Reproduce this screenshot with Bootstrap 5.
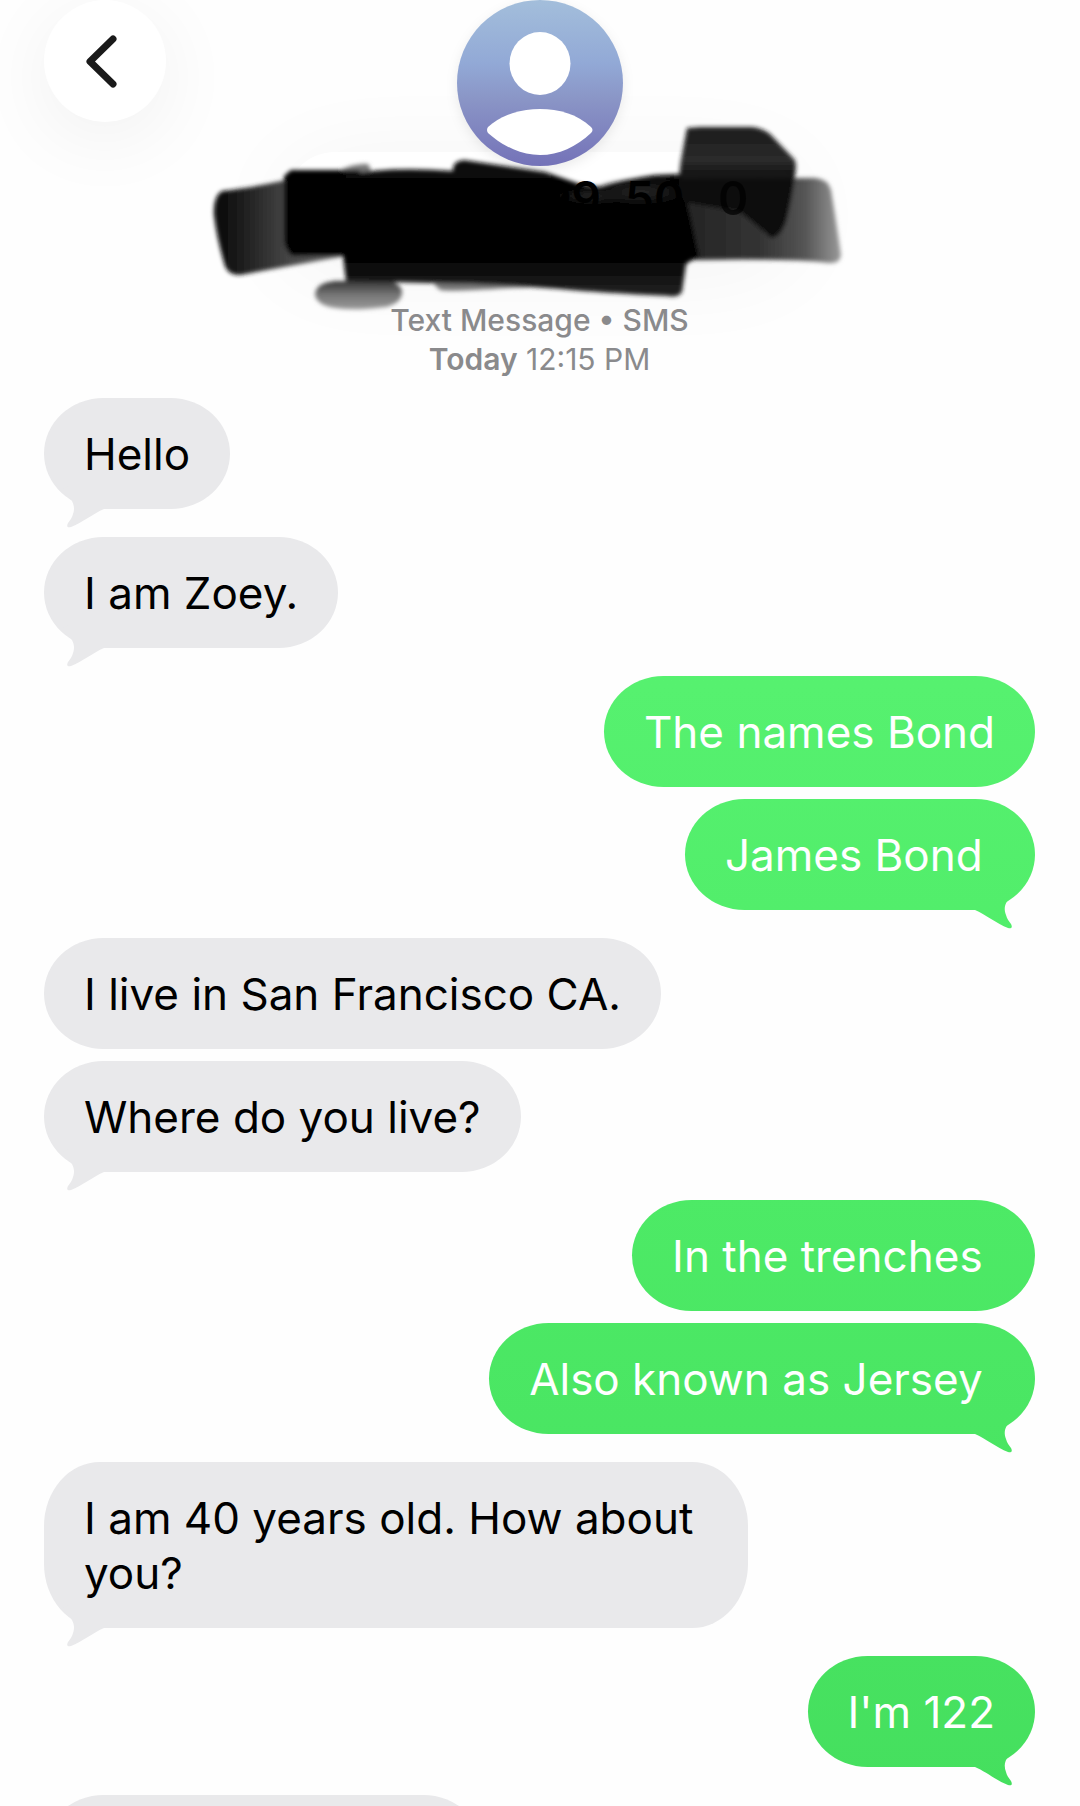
<!DOCTYPE html>
<html lang="en">
<head>
<meta charset="utf-8">
<meta name="viewport" content="width=device-width, initial-scale=1">
<title>Messages</title>
<link href="https://cdn.jsdelivr.net/npm/bootstrap@5.3.0/dist/css/bootstrap.min.css" rel="stylesheet">
<style>
  body { font-family: Inter, "Liberation Sans", sans-serif; background: #fefefe; color: #000; }
  .screen { padding: 0 45px 0 44px; }
  .thread-top { display: grid; grid-template-columns: 1fr auto 1fr; }
  .back-btn { width: 122px; height: 122px; background: #fff; box-shadow: 0 16px 80px rgba(0,0,0,.06); }
  .back-btn:hover { background: #fafafa; }
  .avatar { filter: drop-shadow(0 4px 6px rgba(0,0,0,.08)); }
  .contact-pill { width: 510px; height: 100px; margin-top: -14px; background: #fff; border-radius: 50px; box-shadow: 0 14px 100px rgba(0,0,0,.05); }
  .scribble { top: 110px; left: 50%; transform: translateX(-50%); z-index: 1; }
  .num { font-size: 46px; font-weight: 600; }
  .thread-meta { margin-top: 49px; font-size: 30px; line-height: 39px; color: #8a8a8c; z-index: 2; }
  .thread-meta strong { font-weight: 600; }
  .msgs { margin-top: 19px; gap: 12px; }
  .bubble { position: relative; padding: 29px 40px 27px; font-size: 44px; line-height: 55px; border-radius: 60px / 56px; max-width: 704px; }
  .received { background: #e9e9eb; align-self: flex-start; }
  .sent { align-self: flex-end; color: #fff; white-space: pre-wrap; }
  .sent, .sent.tail::after { background: linear-gradient(#5af576 0%, #56f16f 38%, #4dea66 66%, #45df5e 100%) fixed; }
  .tall { border-radius: 56px / 64px; }
  .tail { margin-bottom: 16px; }
  .tail::after { content: ""; position: absolute; bottom: -20px; width: 48px; height: 44px; }
  .received.tail::after { left: 16px; background: #e9e9eb; clip-path: path("M2 5 L10 13 C14 18 15 24 13 29 C12 33 10 35 8 38 C6 42 8 43 11 42 C22 38 34 28 44 24 L44 0 L10 0 Z"); }
  .sent.tail::after { right: 16px; clip-path: path("M46 5 L38 13 C33 18 33 24 35 29 C36 33 38 35 40 38 C42 42 40 43 37 42 C26 38 14 28 4 24 L4 0 L38 0 Z"); }
  .incoming { width: 439px; height: 111px; }
</style>
</head>
<body>
<div class="screen vh-100 overflow-hidden position-relative d-flex flex-column">
  <header class="thread-top">
    <div>
      <button type="button" class="back-btn btn border-0 rounded-circle p-0 d-flex align-items-center justify-content-center" aria-label="Back">
        <svg width="122" height="122" viewBox="0 0 122 122" fill="none" stroke="#1a1a1a" stroke-width="7" stroke-linecap="round" stroke-linejoin="round"><path d="M69 39 L46 61.500 L69 84"/></svg>
      </button>
    </div>
    <div class="d-flex flex-column align-items-center">
      <svg class="avatar position-relative z-1" width="166" height="166" viewBox="0 0 166 166" role="img" aria-label="Contact">
        <defs><linearGradient id="av" x1="0" y1="0" x2="0" y2="1"><stop offset="0" stop-color="#a3bedb"/><stop offset=".38" stop-color="#92a9d6"/><stop offset=".6" stop-color="#8a95c6"/><stop offset="1" stop-color="#7472b8"/></linearGradient></defs>
        <circle cx="83" cy="83" r="83" fill="url(#av)"/>
        <ellipse cx="83" cy="63.500" rx="30.500" ry="31.500" fill="#fff"/>
        <path d="M31 127 C46 114 64 109 83 109 C102 109 120 114 134 127 Q137 130 134 133 C119 147 102 155 83 155 C64 155 47 147 31 133 Q29 130 31 127 Z" fill="#fff"/>
      </svg>
      <div class="contact-pill"></div>
    </div>
  </header>

  <svg class="scribble position-absolute" width="680" height="210" viewBox="200 110 680 210" role="img" aria-label="Hidden number">
    <defs>
      <linearGradient id="sl" x1="0" x2="1"><stop offset="0" stop-color="#050505"/><stop offset=".2" stop-color="#1c1c1c"/><stop offset=".55" stop-color="#444"/><stop offset="1" stop-color="#666"/></linearGradient>
      <linearGradient id="sr" x1="0" x2="1"><stop offset="0" stop-color="#202020"/><stop offset=".55" stop-color="#333"/><stop offset=".8" stop-color="#555"/><stop offset="1" stop-color="#999"/></linearGradient>
      <linearGradient id="sb" x1="0" y1="0" x2="0" y2="1"><stop offset="0" stop-color="#111"/><stop offset=".3" stop-color="#222"/><stop offset=".42" stop-color="#0c0c0c"/><stop offset="1" stop-color="#0a0a0a"/></linearGradient>
      <linearGradient id="sm" x1="0" y1="0" x2="0" y2="1"><stop offset="0" stop-color="#111"/><stop offset=".22" stop-color="#000"/><stop offset=".7" stop-color="#000"/><stop offset="1" stop-color="#242424"/></linearGradient>
      <radialGradient id="st"><stop offset="0" stop-color="#262626"/><stop offset=".5" stop-color="#161616"/><stop offset="1" stop-color="#161616" stop-opacity="0"/></radialGradient>
      <linearGradient id="sp" x1="0" y1="0" x2="0" y2="1"><stop offset="0" stop-color="#333"/><stop offset=".5" stop-color="#777"/><stop offset="1" stop-color="#999"/></linearGradient>
      <filter id="soft" x="-5%" y="-5%" width="110%" height="110%"><feGaussianBlur stdDeviation="2"/></filter>
    </defs>
    <g filter="url(#soft)">
      <path d="M222 191 Q250 188 286 180 L345 176 L345 256 Q300 264 240 275 Q228 275 225 266 Q217 240 214 215 Q213 196 222 191Z" fill="url(#sl)"/>
      <path d="M315 294 Q316 283 335 281 L390 281 Q403 285 402 294 Q400 304 385 307 Q355 311 335 308 Q316 305 315 294Z" fill="url(#sp)"/>
      <path d="M340 170 Q355 163 368 164 L374 176 L340 180Z" fill="#777"/>
      <path d="M430 280 L440 290 Q450 292 510 288 L560 286 L560 278Z" fill="#777"/>
      <path d="M660 179 L815 178 Q828 179 831 190 Q836 220 841 255 Q840 264 829 263 Q790 258 690 260Z" fill="url(#sr)"/>
      <path d="M284 176 L291 170 L360 170 L360 256 L292 256 Q285 250 284 240Z" fill="#050505"/>
      <path d="M343 175 Q390 166 453 171 Q452 161 464 160 L545 172 L580 184 L600 187 Q630 178 655 175 L680 174 L690 215 L699 256 L686 264 L682 292 Q678 298 668 296 Q600 293 560 289 Q500 284 430 283 L346 281 L343 256Z" fill="url(#sm)"/>
      <ellipse cx="592" cy="196" rx="38" ry="8" fill="url(#st)"/>
      <ellipse cx="640" cy="192" rx="50" ry="14" fill="url(#st)"/>
      <path d="M687 128 L700 127 L752 127 Q762 128 770 134 L794 159 Q797 163 795 175 Q792 200 786 222 Q780 238 771 238 Q758 226 740 212 L684 202 Q677 185 681 160Z" fill="url(#sb)" opacity=".96"/>
    </g>
    <g class="num" fill="#000">
      <text x="315" y="215">+</text>
      <text x="542" y="215">99</text>
      <text x="625" y="215">50</text>
      <text x="718" y="215" opacity=".7">0</text>
    </g>
  </svg>

  <div class="thread-meta text-center position-relative">
    <div class="fw-medium">Text Message • SMS</div>
    <div class="fw-normal"><strong>Today</strong> 12:15 PM</div>
  </div>

  <main class="msgs d-flex flex-column">
    <div class="bubble received tail">Hello</div>
    <div class="bubble received tail">I am Zoey.</div>
    <div class="bubble sent">The names Bond</div>
    <div class="bubble sent tail">James Bond&nbsp;</div>
    <div class="bubble received">I live in San Francisco CA.</div>
    <div class="bubble received tail">Where do you live?</div>
    <div class="bubble sent">In the trenches&nbsp;</div>
    <div class="bubble sent tail">Also known as Jersey&nbsp;</div>
    <div class="bubble received tail tall">I am 40 years old. How about you?</div>
    <div class="bubble sent tail">I'm 122</div>
    <div class="bubble received incoming flex-shrink-0"></div>
  </main>
</div>
<script src="https://cdn.jsdelivr.net/npm/bootstrap@5.3.0/dist/js/bootstrap.bundle.min.js"></script>
</body>
</html>
